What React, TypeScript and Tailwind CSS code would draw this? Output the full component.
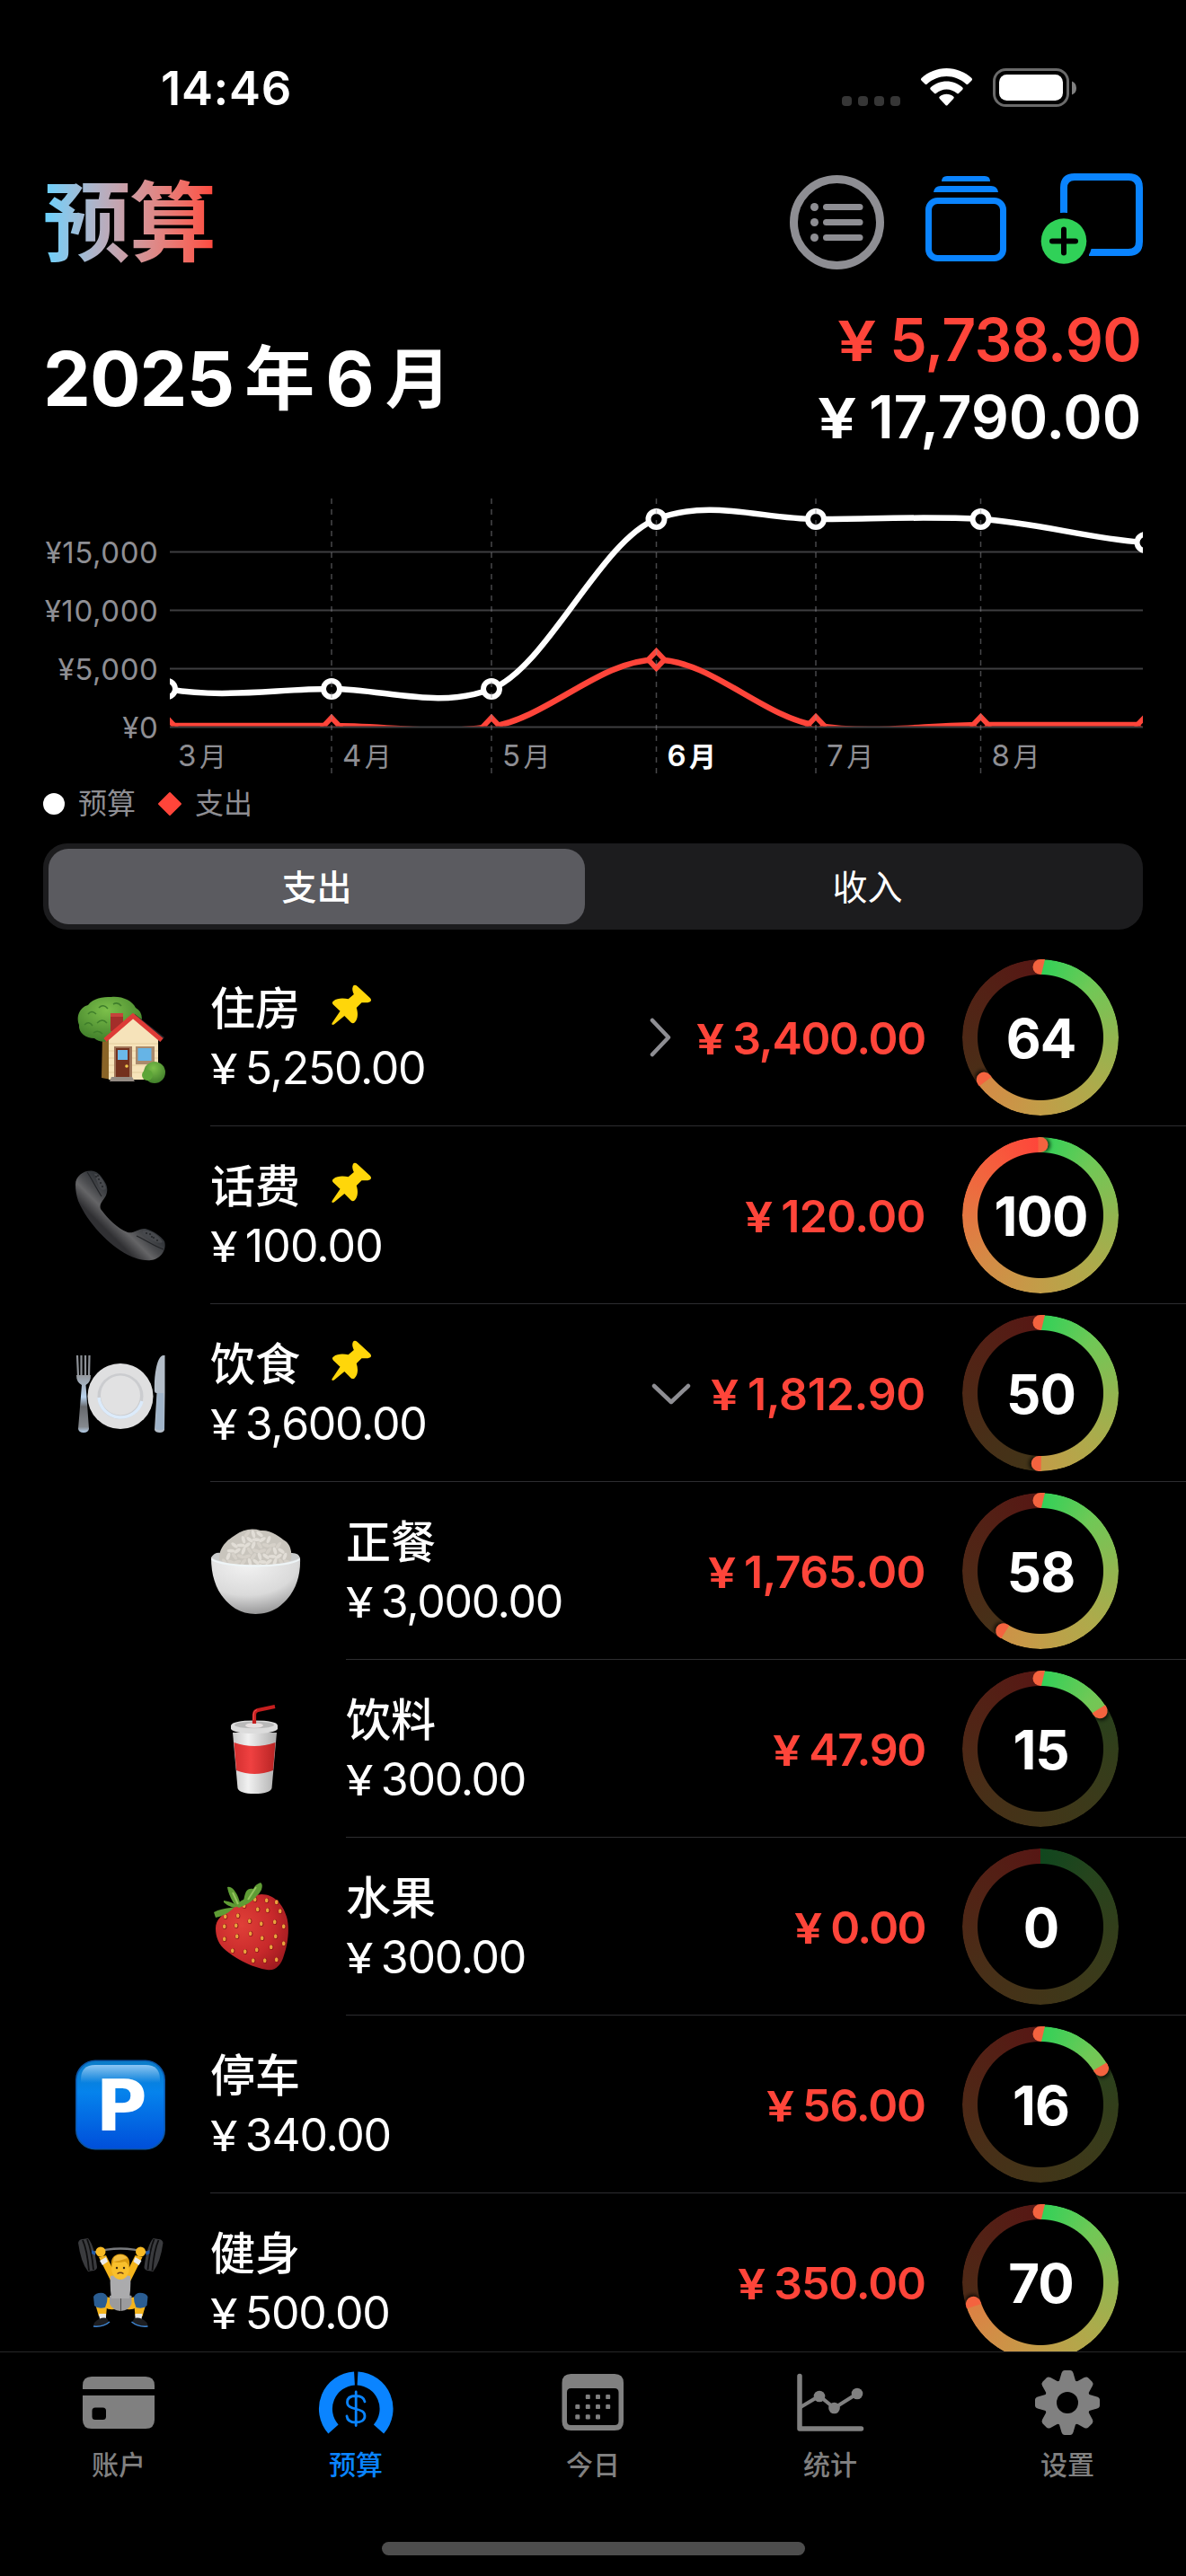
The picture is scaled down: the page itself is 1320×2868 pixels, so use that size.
import React from "react";

const SANS = "font-['Inter','Noto_Sans_CJK_SC',sans-serif]";

/* ---------- status bar ---------- */
function StatusBar() {
  return (
    <div className="flex h-[195px] shrink-0 items-center justify-between pl-[179px] pr-[120px]">
      <span className="pt-px text-[52.5px] font-semibold leading-none tracking-[0.7px] text-white">14:46</span>
      <svg width="270" height="60" viewBox="930 67 270 60">
        {[937, 955, 973, 991].map((x) => (
          <rect key={x} x={x} y="106" width="11" height="11" rx="4" fill="#363636" />
        ))}
        <g fill="#fff">
          <path d="M1053.500 75 C1064 75 1074 79 1081.500 86 Q1082.700 87.200 1081.600 88.400 L1077.500 92.500 Q1076.400 93.600 1075.200 92.500 C1069 87 1061.500 84 1053.500 84 C1045.500 84 1038 87 1031.800 92.500 Q1030.600 93.600 1029.500 92.500 L1025.400 88.400 Q1024.300 87.200 1025.500 86 C1033 79 1043 75 1053.500 75Z" />
          <path d="M1053.500 89.500 C1060 89.500 1066.300 92 1071.200 96.300 Q1072.400 97.500 1071.300 98.700 L1067.200 102.800 Q1066.100 103.900 1064.900 102.800 C1061.700 100 1057.700 98.400 1053.500 98.400 C1049.300 98.400 1045.300 100 1042.100 102.800 Q1040.900 103.900 1039.800 102.800 L1035.700 98.700 Q1034.600 97.500 1035.800 96.300 C1040.700 92 1047 89.500 1053.500 89.500Z" />
          <path d="M1053.500 103.800 C1056.500 103.800 1059 104.800 1061.200 106.500 Q1062.400 107.600 1061.300 108.800 L1054.600 116 Q1053.500 117.200 1052.400 116 L1045.700 108.800 Q1044.600 107.600 1045.800 106.500 C1048 104.800 1050.500 103.800 1053.500 103.800Z" />
        </g>
        <rect x="1106.500" y="76.500" width="82" height="40" rx="13" fill="none" stroke="#6a6a6a" strokeWidth="3" />
        <rect x="1112" y="82" width="71" height="29" rx="8.500" fill="#fff" />
        <path d="M1193 89.500 Q1198 91.500 1198 97 Q1198 102.500 1193 104.500Z" fill="#808080" />
      </svg>
    </div>
  );
}

/* ---------- header ---------- */
function Header() {
  return (
    <div className="flex h-[105px] shrink-0 items-center justify-between pl-[48px] pr-[44px]">
      <h1 className="bg-gradient-to-r from-[#64d2ff] to-[#ff453a] bg-clip-text text-[97px] font-bold leading-[105px] tracking-[-1px] text-transparent">
        预算
      </h1>
      <div className="flex">
        <svg width="110" height="110" viewBox="877 193 110 110">
          <circle cx="931.500" cy="247.500" r="48" fill="none" stroke="#8e8e93" strokeWidth="9" />
          {[230.5, 247.5, 264.5].map((y) => (
            <g key={y}>
              <circle cx="906.500" cy={y} r="4.500" fill="#8e8e93" />
              <rect x="916" y={y - 3.5} width="44.500" height="7" rx="3.500" fill="#8e8e93" />
            </g>
          ))}
        </svg>
        <svg width="157" height="110" viewBox="987 193 157 110">
          <g fill="#0a84ff">
            <path d="M1048 202 Q1048 196 1054 196 H1096 Q1102 196 1102 202Z" />
            <path d="M1039 214 Q1040 207 1047 207 H1103 Q1110 207 1111 214Z" />
          </g>
          <rect x="1033.500" y="223.500" width="83" height="64" rx="10" fill="none" stroke="#0a84ff" strokeWidth="7" />
        </svg>
        <svg width="132" height="110" viewBox="1144 193 132 110">
          <path
            d="M1184 237 V209 Q1184 197 1196 197 H1256 Q1268 197 1268 209 V269 Q1268 281 1256 281 H1212"
            fill="none"
            stroke="#0a84ff"
            strokeWidth="8"
          />
          <circle cx="1184" cy="268.500" r="31.800" fill="#000" />
          <circle cx="1184" cy="268.500" r="25.300" fill="#30d158" />
          <path d="M1184 255.500V281.500M1171 268.500H1197" stroke="#000" strokeWidth="6" strokeLinecap="round" />
        </svg>
      </div>
    </div>
  );
}

function Summary() {
  return (
    <div className="flex h-[206px] shrink-0 items-center justify-between pl-[48px] pr-[50px] pt-[37px]">
      <div className="flex items-center text-[84px] font-bold leading-none text-white">
        <span className="tracking-[-1px]">2025</span>
        <span className="ml-[12px] text-[78px] font-semibold">年</span>
        <span className="ml-[12px]">6</span>
        <span className="ml-[12px] text-[73px] font-semibold">月</span>
      </div>
      <div className="flex flex-col items-end text-[66px] font-semibold leading-[85px]">
        <div className="flex items-baseline text-[#ff453a]">
          <span className="mr-[23px] origin-left scale-x-[1.24] text-[62px]">¥</span>
          <span className="tracking-[-0.7px]">5,738.90</span>
        </div>
        <div className="flex items-baseline text-white">
          <span className="mr-[22px] origin-left scale-x-[1.24] text-[62px]">¥</span>
          <span className="tracking-[-0.200px]">17,790.00</span>
        </div>
      </div>
    </div>
  );
}

/* ---------- chart ---------- */
const AXIS = [
  { y: 614, label: "¥15,000" },
  { y: 679, label: "¥10,000" },
  { y: 744, label: "¥5,000" },
  { y: 809, label: "¥0" },
];
const MONTHS = [
  { x: 186, n: "3" },
  { x: 369, n: "4" },
  { x: 547, n: "5" },
  { x: 730.5, n: "6" },
  { x: 908, n: "7" },
  { x: 1091.5, n: "8" },
];
const BUDGET = [
  [186, 767],
  [369, 767],
  [547, 767],
  [730.5, 578],
  [908, 578],
  [1091.5, 578],
  [1274.5, 604],
];
const SPENT = [
  [186, 809],
  [369, 808.5],
  [547, 808.5],
  [730.5, 734.5],
  [908, 807.5],
  [1091.5, 807.5],
  [1274.5, 807.5],
];

function Chart() {
  return (
    <svg className="shrink-0" width="1320" height="364" viewBox="0 506 1320 364">
      <defs>
        <clipPath id="plot">
          <rect x="189" y="540" width="1083" height="268.500" />
        </clipPath>
      </defs>
      {AXIS.map((a) => (
        <g key={a.y}>
          <path d={`M189 ${a.y + 0.5}H1272`} stroke="#3e3e40" strokeWidth="2" />
          <text x="176.500" y={a.y + 12.5} textAnchor="end" fontSize="33" letterSpacing="0.6" fill="#8e8e93">
            {a.label}
          </text>
        </g>
      ))}
      <g clipPath="url(#plot)" fill="none">
        <path
          d="M186 767 C247 778 308 767 369 767 C428 767 488 790 547 767 C608 744 669 601 730.500 578 C790 555 849 578 908 578 C969 578 1030 574.500 1091.500 578 C1153 581.500 1213 600 1274.500 604"
          stroke="#fff"
          strokeWidth="6.500"
        />
        {BUDGET.map(([x, y]) => (
          <circle key={x} cx={x} cy={y} r="9" fill="#000" stroke="#fff" strokeWidth="6" />
        ))}
        <path
          d="M186 808 H369 C428 808 488 818 547 809 C608 800 669 734.500 730.500 734.500 C790 734.500 849 798 908 807.500 C969 818 1030 807 1091.500 807 H1274.500"
          stroke="#ff453a"
          strokeWidth="6.500"
        />
        {SPENT.map(([x, y]) => (
          <path
            key={x}
            d={`M${x} ${y - 9.5}L${x + 9} ${y}L${x} ${y + 9.5}L${x - 9} ${y}Z`}
            fill="#000"
            stroke="#ff453a"
            strokeWidth="5.800"
          />
        ))}
      </g>
      {MONTHS.map((m, i) => (
        <g key={m.n}>
          {i > 0 && (
            <path d={`M${m.x} 555V861`} stroke="#8e8e93" strokeOpacity="0.5" strokeWidth="1.500" strokeDasharray="6 6" />
          )}
          <text
            x={i > 0 ? m.x + 12 : 198}
            y="853"
            fontSize="33"
            fontWeight={m.n === "6" ? 600 : 400}
            fill={m.n === "6" ? "#fff" : "#8e8e93"}
          >
            {m.n}
            <tspan dx="3.500" fontSize="30">
              月
            </tspan>
          </text>
        </g>
      ))}
    </svg>
  );
}

function Legend() {
  return (
    <div className="flex h-[50px] shrink-0 items-center pl-[48px] text-[32px] leading-none text-[#8e8e93]">
      <span className="size-[24px] rounded-full bg-white" />
      <span className="ml-[15px]">预算</span>
      <svg className="ml-[24px]" width="28" height="28" viewBox="0 0 28 28">
        <path d="M14 2L26 14L14 26L2 14Z" fill="#ff453a" stroke="#ff453a" strokeWidth="2" strokeLinejoin="round" />
      </svg>
      <span className="ml-[14px]">支出</span>
    </div>
  );
}

function Segmented() {
  return (
    <div className="mx-[48px] mt-[19px] flex h-[96px] shrink-0 rounded-[27px] bg-[#1c1c1e] p-[6px] text-[39px] leading-none text-white">
      <div className="flex w-[597px] items-center justify-center rounded-[22px] bg-[#5b5b60] font-medium">支出</div>
      <div className="flex flex-1 items-center justify-center pl-[14px]">收入</div>
    </div>
  );
}

/* ---------- category pictures ---------- */
function HouseArt() {
  return (
    <>
      <defs>
        <radialGradient id="leaf" cx=".45" cy=".3" r=".75">
          <stop offset="0" stopColor="#7cc04a" />
          <stop offset="1" stopColor="#3c7a28" />
        </radialGradient>
      </defs>
      <path d="M30 48H40V97L29 95Z" fill="#8a6427" />
      <path
        d="M4 36C0 25 6 16 14 14C20 6 30 5 40 5C52 4 63 9 67 17C76 22 76 34 68 40C64 48 52 46 46 50C38 56 26 56 21 51C12 51 3 45 4 36Z"
        fill="url(#leaf)"
      />
      <path d="M14 24Q18 19 23 24M26 17Q31 12 36 18M10 36Q15 31 19 37M24 34Q30 28 35 34M42 13Q47 10 51 15M20 45Q25 41 30 46" stroke="#3f7e2b" strokeWidth="1.500" fill="none" />
      <rect x="39" y="23" width="14" height="20" fill="#a32e2a" />
      <path d="M39 23H53V27H39Z" fill="#c5433b" />
      <path d="M66 24L99 50L94 55L64 30Z" fill="#25262b" />
      <path d="M37 51L64 28L92 51V97H37Z" fill="#f6e3ba" />
      <path d="M37 57H92M37 65H92M37 73H92M37 81H92M37 89H92" stroke="#e5cd9e" strokeWidth="1" />
      <path d="M33 53L64 26L96 53" fill="none" stroke="#dd3b36" strokeWidth="5" strokeLinejoin="miter" />
      <rect x="43" y="60" width="20" height="36" fill="#a0765a" />
      <rect x="45" y="62" width="15" height="34" fill="#73301d" />
      <rect x="47" y="64" width="11" height="11" fill="#6bb8e8" />
      <circle cx="57" cy="82" r="1.800" fill="#f2c94c" />
      <rect x="67" y="60" width="21" height="20" fill="#a98a6d" />
      <rect x="69.500" y="62" width="15" height="14" fill="#66b4e6" />
      <path d="M40 94H63L66 99H38Z" fill="#958c84" />
      <circle cx="88" cy="89" r="12" fill="url(#leaf)" />
      <circle cx="80" cy="92" r="6" fill="#5da538" />
    </>
  );
}

function PhoneArt() {
  return (
    <>
      <defs>
        <linearGradient id="handset" x1="0" y1="1" x2="1" y2="0">
          <stop offset=".34" stopColor="#303033" />
          <stop offset=".44" stopColor="#656567" />
          <stop offset=".5" stopColor="#4b4c4f" />
          <stop offset=".58" stopColor="#33363a" />
        </linearGradient>
      </defs>
      <path
        d="M0 16C0 6 9 0 18 0.500C25 1 28 6 32 12C36 18 36 23 34 28C31 34 26 37 28 43C36 54 46 64 58 69C65 71 70 64 78 65C86 67 95 73 99 79C102 88 95 99 84 100C76 101 66 98 58 94C37 83 14 59 3 34C1 28 0 22 0 16Z"
        fill="url(#handset)"
      />
      <path d="M13 2C18 9 22 18 29 29" stroke="#222427" strokeWidth="1.200" fill="none" />
      <path d="M68 73C77 77 87 84 98 88" stroke="#222427" strokeWidth="1.200" fill="none" />
      <path d="M21 4C26 2 33 13 34 20C32 23 28 22 26 18Z" fill="#46484c" />
      <path d="M75 67C82 65 94 73 97 80C92 83 80 76 74 71Z" fill="#46484c" />
      <g fill="#222326">
        {[[23, 7], [26, 10], [28, 14], [30, 18], [25, 6], [79, 70], [83, 71], [87, 75], [91, 78], [85, 74]].map(([x, y]) => (
          <circle key={`${x}-${y}`} cx={x} cy={y} r="1" />
        ))}
      </g>
    </>
  );
}

function PlateArt() {
  return (
    <>
      <defs>
        <linearGradient id="steel" x1="0" y1="0" x2="0" y2="1">
          <stop offset="0" stopColor="#94989d" />
          <stop offset=".38" stopColor="#b9d3ee" />
          <stop offset=".55" stopColor="#67696d" />
          <stop offset=".9" stopColor="#85898e" />
          <stop offset="1" stopColor="#b9d3ee" />
        </linearGradient>
      </defs>
      <path d="M2 8L3 31M6.500 8V31M11 8V31M15.500 8L15 31" stroke="#8d9197" strokeWidth="2.200" />
      <path d="M1 30H17Q17 38 11.500 41L15 90Q14 94 9 94Q4 94 3 90L7 41Q1 38 1 30Z" fill="url(#steel)" />
      <path d="M88 48C87 30 91 8 98 8H99.500V50L99 91Q98 94 94 94Q89 94 88 91L90.500 50Q88 50 88 48Z" fill="#b3bdc8" />
      <path d="M91 50H98L99 90Q94 92 89 90Z" fill="#a0b4c9" />
      <circle cx="50" cy="53.500" r="36.500" fill="#dfdfe0" />
      <circle cx="50" cy="53.500" r="25.500" fill="#cbcccf" />
      <path d="M26 55A24.500 24.500 0 0 0 74 59" fill="none" stroke="#dcebfb" strokeWidth="3.500" />
      <circle cx="50" cy="52.500" r="22" fill="#e1e1e2" />
    </>
  );
}

function RiceArt() {
  const grains: [number, number, number][] = [];
  for (let r = 0; r < 7; r++) {
    for (let c = 0; c < 12; c++) {
      const x = 12 + c * 7 + (r % 2) * 3;
      const y = 9 + r * 6.2;
      const dx = (x - 50) / 40;
      if (y > 7 + dx * dx * 30 && x < 90) grains.push([x, y, ((r * 5 + c * 7) % 9) * 18 - 70]);
    }
  }
  return (
    <>
      <defs>
        <radialGradient id="bowl" cx=".4" cy=".1" r=".95">
          <stop offset="0" stopColor="#f3f3f3" />
          <stop offset=".6" stopColor="#dadada" />
          <stop offset="1" stopColor="#8f8f90" />
        </radialGradient>
      </defs>
      <path d="M0 35Q4 29 10 30H90Q98 30 99 36L95 46H4Z" fill="#c9cbcb" />
      <path d="M9 38C8 25 17 16 27 10C35 4 45 2 55 5C67 4 77 13 83 17C89 22 90 30 89 38L70 44H28Z" fill="#c9c5bd" />
      {grains.map(([x, y, a]) => (
        <ellipse key={`${x}-${y}`} cx={x} cy={y} rx="4.300" ry="1.900" fill={a % 4 ? "#e2ded7" : "#d6d1c9"} transform={`rotate(${a} ${x} ${y})`} />
      ))}
      <path d="M0 35C14 46 84 46 99 35C100 59 92 78 74 91C60 100 40 100 27 92C9 80 0 61 0 35Z" fill="url(#bowl)" />
      <path d="M0.500 37C14 47 85 47 98.500 37" fill="none" stroke="#eef5f7" strokeWidth="2" />
    </>
  );
}

function CupArt() {
  return (
    <>
      <defs>
        <linearGradient id="paper">
          <stop offset="0" stopColor="#c9c9c9" />
          <stop offset=".35" stopColor="#f1f1f1" />
          <stop offset="1" stopColor="#aeaeae" />
        </linearGradient>
        <linearGradient id="band">
          <stop offset="0" stopColor="#d22f2f" />
          <stop offset=".4" stopColor="#f04141" />
          <stop offset="1" stopColor="#b82424" />
        </linearGradient>
      </defs>
      <path d="M24 32H73L67.500 94Q65 100 48 100Q32 100 29.500 94Z" fill="url(#paper)" />
      <path d="M25.500 43Q48 51 71.500 43L69 74Q48 82 28 74Z" fill="url(#band)" />
      <path d="M22 24Q24 18.500 48 18.500Q73 18.500 74 24V28Q70 33 48 33Q26 33 22 28Z" fill="#dcdcdc" />
      <ellipse cx="48" cy="23.500" rx="22" ry="3.800" fill="#b9b9b9" />
      <ellipse cx="48" cy="24" rx="10" ry="2.800" fill="#e6e0e0" />
      <path d="M48 22V12Q48 8 52 7L71 3" fill="none" stroke="#c61f1f" strokeWidth="4.200" />
      <path d="M47 18V12Q47 7.500 51 6.500" fill="none" stroke="#ef5353" strokeWidth="1" />
    </>
  );
}

function StrawberryArt() {
  const seeds = [
    [49, 20], [62, 21], [73, 23], [37, 27], [52, 31], [63, 32], [77, 33], [16, 39], [30, 38], [43, 44], [56, 47],
    [71, 45], [15, 50], [28, 49], [81, 50], [29, 61], [44, 58], [57, 63], [72, 61], [15, 64], [24, 77], [38, 78],
    [51, 76], [67, 73], [81, 69], [47, 88], [60, 88], [73, 87],
  ];
  return (
    <>
      <defs>
        <radialGradient id="berry" cx=".35" cy=".4" r=".75">
          <stop offset="0" stopColor="#e04038" />
          <stop offset=".6" stopColor="#c8292b" />
          <stop offset="1" stopColor="#9c191f" />
        </radialGradient>
      </defs>
      <path
        d="M5 52C5 42 13 36 22 31C32 24 43 15 56 14C70 14 80 25 84 39C88 52 85 71 81 82C78 93 71 100 62 98C47 96 29 87 17 77C8 70 5 61 5 52Z"
        fill="url(#berry)"
      />
      {seeds.map(([x, y]) => (
        <g key={`${x}-${y}`}>
          <ellipse cx={x} cy={y} rx="2.400" ry="3" fill="#8d1519" />
          <ellipse cx={x - 0.3} cy={y - 0.3} rx="1.800" ry="2.500" fill="#e9a23c" />
        </g>
      ))}
      <g fill="#5f9c35">
        <path d="M27 27C22 19 19 13 18 6Q22 5 26 10Q31 17 32 24Z" />
        <path d="M3 34C10 30 18 30 26 28Q20 36 5 40Z" />
        <path d="M14 21C21 22 26 24 29 28Q22 30 14 23Z" />
        <path d="M36 22C38 10 40 7 47 8Q49 3 55 1Q58 3 56 9Q52 18 38 23Z" />
        <path d="M27 27C33 20 38 18 50 17Q44 24 31 29Z" />
      </g>
      <path d="M24 12L30 25M50 6L41 20" stroke="#95c45e" strokeWidth="2" />
    </>
  );
}

function ParkingArt() {
  return (
    <>
      <defs>
        <linearGradient id="pbg" x1="0" y1="0" x2="0" y2="1">
          <stop offset="0" stopColor="#0b7cc8" />
          <stop offset=".35" stopColor="#0583ec" />
          <stop offset="1" stopColor="#004fda" />
        </linearGradient>
        <linearGradient id="pshine" x1="0" y1="0" x2="0" y2="1">
          <stop offset="0" stopColor="#8cc6f5" />
          <stop offset="1" stopColor="#8cc6f5" stopOpacity="0" />
        </linearGradient>
      </defs>
      <rect x="0" y="0.500" width="100" height="100" rx="22" fill="#0a55a8" />
      <rect x="1.500" y="2" width="97" height="97" rx="21" fill="url(#pbg)" />
      <path d="M6 26V22Q6 6 22 6H78Q94 6 94 22V26Z" fill="url(#pshine)" />
      <text x="22.500" y="79" fontSize="78" fontWeight="700" fill="#fff" fontFamily="DejaVu Sans">
        P
      </text>
    </>
  );
}

function LifterArt() {
  return (
    <>
      <path d="M20 17Q50 8 80 17" stroke="#77797c" strokeWidth="2.500" fill="none" />
      {[false, true].map((flip) => (
        <g key={String(flip)} transform={flip ? "translate(100.500 0) scale(-1 1)" : undefined}>
          <path d="M3 6Q4 2 8 2L14 1Q21 9 24 33Q24 36 20 37L14 38Q6 28 3 6Z" fill="#3a3b3e" />
          <path d="M8 3Q13 14 15 37M13 2Q18 14 20 36" stroke="#0d0d0e" strokeWidth="1.800" fill="none" />
          <path d="M26 22L34 20L46 44L42 54Z" fill="#f4b41c" />
          <path d="M27 26L34 22L36 27L30 31Z" fill="#ececec" />
          <ellipse cx="28" cy="16" rx="5.500" ry="5.500" fill="#f7ba24" />
          <path d="M18 14L22 16V20L18 18Z" fill="#2059a5" />
          <path d="M33 66L44 68L48 79Q38 82 33 78Z" fill="#f4b41c" />
          <path d="M38 65L50 62V82Q41 81 38 74Z" fill="#9b9b9d" />
          <path d="M22 74L35 77L34 88H26Z" fill="#f4b41c" />
          <path d="M26 85H34V91H27Z" fill="#e8e8e8" />
          <path d="M20 66Q23 61 31 62Q37 64 35 72L33 78Q25 80 21 76Z" fill="#2a5d92" />
          <path d="M21 95Q28 88 35 90L37 94Q34 98 24 99.500L20 98Z" fill="#1d1e21" />
          <path d="M20 99Q31 100 38 94" stroke="#3f87d4" strokeWidth="1.500" fill="none" />
        </g>
      ))}
      <path d="M39 43Q45 41 50 47Q55 41 61 43Q62 54 60 68H40Q38 54 39 43Z" fill="#ababad" />
      <ellipse cx="50" cy="34" rx="10" ry="13" fill="#f9c02c" />
      <path d="M40 34Q38 19 50 18.500Q62 19 60 34Q58 28 55 27Q46 29 42 27Z" fill="#d99a10" />
      <path d="M43 22Q50 16 58 23Q50 26 42 27Z" fill="#f3bd3e" />
      <circle cx="46" cy="34" r="1.200" fill="#3b2a14" />
      <circle cx="54" cy="34" r="1.200" fill="#3b2a14" />
      <path d="M46.500 40.500Q50 38 53.500 40.500" stroke="#6a3b12" strokeWidth="1.500" fill="none" />
    </>
  );
}

/* ---------- progress ring ---------- */
const STOPS: [number, number, number][] = [
  [48, 209, 88],
  [112, 200, 86],
  [146, 181, 80],
  [174, 170, 75],
  [194, 157, 72],
  [210, 141, 70],
  [229, 119, 65],
  [245, 95, 61],
  [255, 69, 58],
];

function colorAt(t: number, dim: number) {
  const i = Math.min(7, Math.floor(t * 8));
  const f = t * 8 - i;
  const c = STOPS[i].map((v, k) => Math.round((v + (STOPS[i + 1][k] - v) * f) * dim));
  return `rgb(${c[0]},${c[1]},${c[2]})`;
}

function Ring({ value }: { value: number }) {
  const p = value / 100;
  const stops: string[] = [];
  for (let i = 0; i <= 8; i++) {
    const t = i / 8;
    if (p > t || (p === 1 && t === 1)) stops.push(`${colorAt(t, 1)} ${t * 360}deg`);
  }
  if (p > 0 && p < 1) stops.push(`${colorAt(p, 1)} ${p * 360}deg`);
  if (p < 1) stops.push(`${colorAt(p, 0.34)} ${p * 360}deg`);
  for (let i = 0; i <= 8; i++) {
    const t = i / 8;
    if (t > p) stops.push(`${colorAt(t, 0.34)} ${t * 360}deg`);
  }
  return (
    <div className="relative ml-[41px] flex size-[174px] shrink-0 items-center justify-center">
      <div
        className="absolute inset-0 rounded-full [mask:radial-gradient(circle,transparent_69.5px,#000_70.5px)]"
        style={{ background: `conic-gradient(${stops.join(",")})` }}
      />
      {value > 0 && (
        <svg className="absolute inset-0" width="174" height="174" viewBox="-87 -87 174 174">
          <defs>
            <filter id="capShadow" x="-100%" y="-100%" width="300%" height="300%">
              <feGaussianBlur stdDeviation="2.200" />
            </filter>
            <clipPath id="band-ring">
              <path d="M-87 0A87 87 0 1 0 87 0A87 87 0 1 0 -87 0ZM-70 0A70 70 0 1 0 70 0A70 70 0 1 0 -70 0Z" clipRule="evenodd" />
            </clipPath>
          </defs>
          {value < 100 && <path d="M5 -87H0A8.500 8.500 0 0 0 0 -70H1Z" fill="#f4633f" />}
          <g clipPath="url(#band-ring)">
            <g transform={`rotate(${p * 360})`}>
              <path d="M0 -87A8.500 8.500 0 0 1 0 -70Z" transform="translate(2.500 0)" fill="#000" fillOpacity="0.75" filter="url(#capShadow)" />
            </g>
          </g>
          <g transform={`rotate(${p * 360})`}>
            <path d="M-2.500 -87H0A8.500 8.500 0 0 1 0 -70H-2.500Z" fill="#f4633f" />
          </g>
        </svg>
      )}
      <span className="relative pl-[1px] pt-[2px] text-[60px] font-bold leading-none tracking-[-1px] text-white">{Math.floor(value)}</span>
    </div>
  );
}

/* ---------- rows ---------- */
type Item = {
  art: () => React.ReactElement;
  name: string;
  budget: string;
  spent: string;
  spentClass: string;
  value: number;
  pinned?: boolean;
  child?: boolean;
  chevron?: "right" | "down";
};

const ITEMS: Item[] = [
  { art: HouseArt, name: "住房", budget: "5,250.00", spent: "3,400.00", spentClass: "tracking-[-1.3px]", value: 64.76, pinned: true, chevron: "right" },
  { art: PhoneArt, name: "话费", budget: "100.00", spent: "120.00", spentClass: "tracking-[-0.6px]", value: 100, pinned: true },
  { art: PlateArt, name: "饮食", budget: "3,600.00", spent: "1,812.90", spentClass: "tracking-[-0.3px]", value: 50.36, pinned: true, chevron: "down" },
  { art: RiceArt, name: "正餐", budget: "3,000.00", spent: "1,765.00", spentClass: "tracking-[-0.6px]", value: 58.83, child: true },
  { art: CupArt, name: "饮料", budget: "300.00", spent: "47.90", spentClass: "tracking-[-1.3px]", value: 15.97, child: true },
  { art: StrawberryArt, name: "水果", budget: "300.00", spent: "0.00", spentClass: "tracking-[-1.6px]", value: 0, child: true },
  { art: ParkingArt, name: "停车", budget: "340.00", spent: "56.00", spentClass: "tracking-[-1.1px]", value: 16.47 },
  { art: LifterArt, name: "健身", budget: "500.00", spent: "350.00", spentClass: "tracking-[-1.1px]", value: 70 },
];

function Pin() {
  return (
    <svg className="ml-[34px] -mt-[8px]" width="46" height="46" viewBox="0 0 48 48">
      <path
        d="M26 2C27 0.500 29 0.500 31 2L46 16Q48 18.500 46 20C42 22 39 21 36 21L30 27C32 33 32 40 28 44Q26 46 23.500 44L16 36.500L4 46.500Q1 48 1.500 45L11 31L3 23.500Q1 21 3 19.500C8 15.500 15 16 20.500 17L27 11.500C25.500 8 24.500 5 26 2Z"
        fill="#ffd60a"
      />
    </svg>
  );
}

function Row({ item }: { item: Item }) {
  const Art = item.art;
  return (
    <div className={item.child ? "flex h-[198px] shrink-0 pl-[235px]" : "flex h-[198px] shrink-0 pl-[84px]"}>
      <div className="flex w-[100px] shrink-0 items-center">
        <svg width="100" height="101" viewBox="0 0 100 101" overflow="visible">
          <Art />
        </svg>
      </div>
      <div className="ml-[50px] flex flex-1 items-center border-b border-[#2d2d30] pr-[75px]">
        <div className="flex flex-col pt-[3px]">
          <div className="flex h-[67px] items-center text-[50px] font-medium leading-none text-white">
            <span>{item.name}</span>
            {item.pinned && <Pin />}
          </div>
          <div className="flex h-[67px] items-baseline text-[50px] leading-[67px] text-white">
            <span className="mr-[13px] origin-left scale-x-[1.18] text-[47px]">¥</span>
            <span className={item.budget === "100.00" ? "tracking-[-0.9px]" : "tracking-[-1.3px]"}>{item.budget}</span>
          </div>
        </div>
        <div className="ml-auto flex items-center">
          {item.chevron === "right" && (
            <svg className="mr-[28px]" width="24" height="44" viewBox="0 0 24 44">
              <path d="M3 3L21 22L3 41" fill="none" stroke="#8e8e93" strokeWidth="4.500" strokeLinecap="round" strokeLinejoin="round" />
            </svg>
          )}
          {item.chevron === "down" && (
            <svg className="mr-[22px] mt-[2px]" width="44" height="24" viewBox="0 0 44 24">
              <path d="M3 3L22 21L41 3" fill="none" stroke="#8e8e93" strokeWidth="4.500" strokeLinecap="round" strokeLinejoin="round" />
            </svg>
          )}
          <div className="flex items-baseline pt-[3px] text-[50px] font-semibold leading-[67px] text-[#ff453a]">
            <span className="mr-[14px] origin-left scale-x-[1.18] text-[47px]">¥</span>
            <span className={item.spentClass}>{item.spent}</span>
          </div>
          <Ring value={item.value} />
        </div>
      </div>
    </div>
  );
}

/* ---------- tab bar ---------- */
function CardIcon() {
  return (
    <svg width="84" height="76" viewBox="90 2637 84 76">
      <g fill="#808080">
        <path d="M92 2660V2656Q92 2646 102 2646H162Q172 2646 172 2656V2660Z" />
        <path
          d="M92 2667H172V2694Q172 2704 162 2704H102Q92 2704 92 2694ZM106 2680.500Q102.500 2680.500 102.500 2684V2690.500Q102.500 2694 106 2694H114.500Q118 2694 118 2690.500V2684Q118 2680.500 114.500 2680.500Z"
          fillRule="evenodd"
        />
      </g>
    </svg>
  );
}

function BudgetIcon() {
  return (
    <svg width="84" height="76" viewBox="353 2637 84 76">
      <path d="M393.500 2648A34 34 0 0 0 370 2704.500" fill="none" stroke="#0a84ff" strokeWidth="15" />
      <path d="M397 2648A34 34 0 0 1 420.500 2704.500" fill="none" stroke="#0a84ff" strokeWidth="15" />
      <path
        d="M405 2674C404 2669 400 2667.500 395 2667.500C389 2667.500 385.500 2670 385.500 2674.500C385.500 2679 389 2680.500 395 2682C401 2683.500 405 2685 405 2690C405 2694.500 401 2697 395 2697C389 2697 385.500 2695 385 2690M395.200 2663V2700.500"
        fill="none"
        stroke="#0a84ff"
        strokeWidth="2.800"
        strokeLinecap="round"
      />
    </svg>
  );
}

function CalendarIcon() {
  const dots = [
    [653.8, 2668.5], [665, 2668.5], [676.2, 2668.5],
    [642.3, 2679.5], [653.8, 2679.5], [665, 2679.5], [676.2, 2679.5],
    [642.3, 2690.8], [653.8, 2690.8], [665, 2690.8],
  ];
  return (
    <svg width="84" height="76" viewBox="617.500 2637 84 76">
      <path
        d="M635 2643H683.500Q693.500 2643 693.500 2653V2696Q693.500 2706 683.500 2706H635Q625 2706 625 2696V2653Q625 2643 635 2643ZM635 2659Q630.500 2659 630.500 2663.500V2695.500Q630.500 2700 635 2700H683.500Q688 2700 688 2695.500V2663.500Q688 2659 683.500 2659Z"
        fill="#808080"
        fillRule="evenodd"
      />
      {dots.map(([x, y]) => (
        <rect key={`${x}-${y}`} x={x - 2.5} y={y - 2.6} width="5" height="5.200" rx="1.200" fill="#808080" />
      ))}
    </svg>
  );
}

function StatsIcon() {
  return (
    <svg width="84" height="76" viewBox="882 2637 84 76">
      <path d="M890 2645.500V2704H958.500" fill="none" stroke="#808080" strokeWidth="5.500" strokeLinecap="round" strokeLinejoin="round" />
      <path d="M891 2680L912 2667.500L928.500 2681L954 2665" fill="none" stroke="#808080" strokeWidth="4" />
      <circle cx="912" cy="2668" r="6.300" fill="#808080" />
      <circle cx="928.500" cy="2681" r="6.300" fill="#808080" />
      <circle cx="954" cy="2665" r="6.300" fill="#808080" />
    </svg>
  );
}

function GearIcon() {
  return (
    <svg width="84" height="76" viewBox="-42 -38 84 76">
      <defs>
        <mask id="hub">
          <rect x="-42" y="-38" width="84" height="76" fill="#fff" />
          <circle r="12" fill="#000" />
        </mask>
      </defs>
      <g fill="#808080" mask="url(#hub)">
        <circle r="26" />
        {[0, 45, 90, 135, 180, 225, 270, 315].map((a) => (
          <path key={a} d="M-10 -21L-6.500 -33Q-5.500 -36 -3 -36H3Q5.500 -36 6.500 -33L10 -21Z" transform={`rotate(${a})`} />
        ))}
      </g>
    </svg>
  );
}

const TABS = [
  { label: "账户", icon: CardIcon },
  { label: "预算", icon: BudgetIcon, active: true },
  { label: "今日", icon: CalendarIcon },
  { label: "统计", icon: StatsIcon },
  { label: "设置", icon: GearIcon },
];

function TabBar() {
  return (
    <div className="flex h-[250px] shrink-0 flex-col border-t border-[#262628]">
      <div className="grid grid-cols-5 pt-[18px]">
        {TABS.map(({ label, icon: Icon, active }) => (
          <div key={label} className={active ? "flex flex-col items-center text-[#0a84ff]" : "flex flex-col items-center text-[#808080]"}>
            <Icon />
            <span className="mt-[11px] text-[30px] font-medium leading-[40px]">{label}</span>
          </div>
        ))}
      </div>
      <div className="mx-auto mb-[23px] mt-auto h-[15px] w-[471px] rounded-full bg-[#4d4d4d]" />
    </div>
  );
}

export default function App() {
  return (
    <div className={`flex h-[2868px] w-[1320px] flex-col overflow-hidden bg-black ${SANS}`}>
      <StatusBar />
      <Header />
      <Summary />
      <Chart />
      <Legend />
      <Segmented />
      <div className="mt-[21px] flex h-[1562px] shrink-0 flex-col overflow-hidden">
        {ITEMS.map((item) => (
          <Row key={item.name} item={item} />
        ))}
      </div>
      <TabBar />
    </div>
  );
}
